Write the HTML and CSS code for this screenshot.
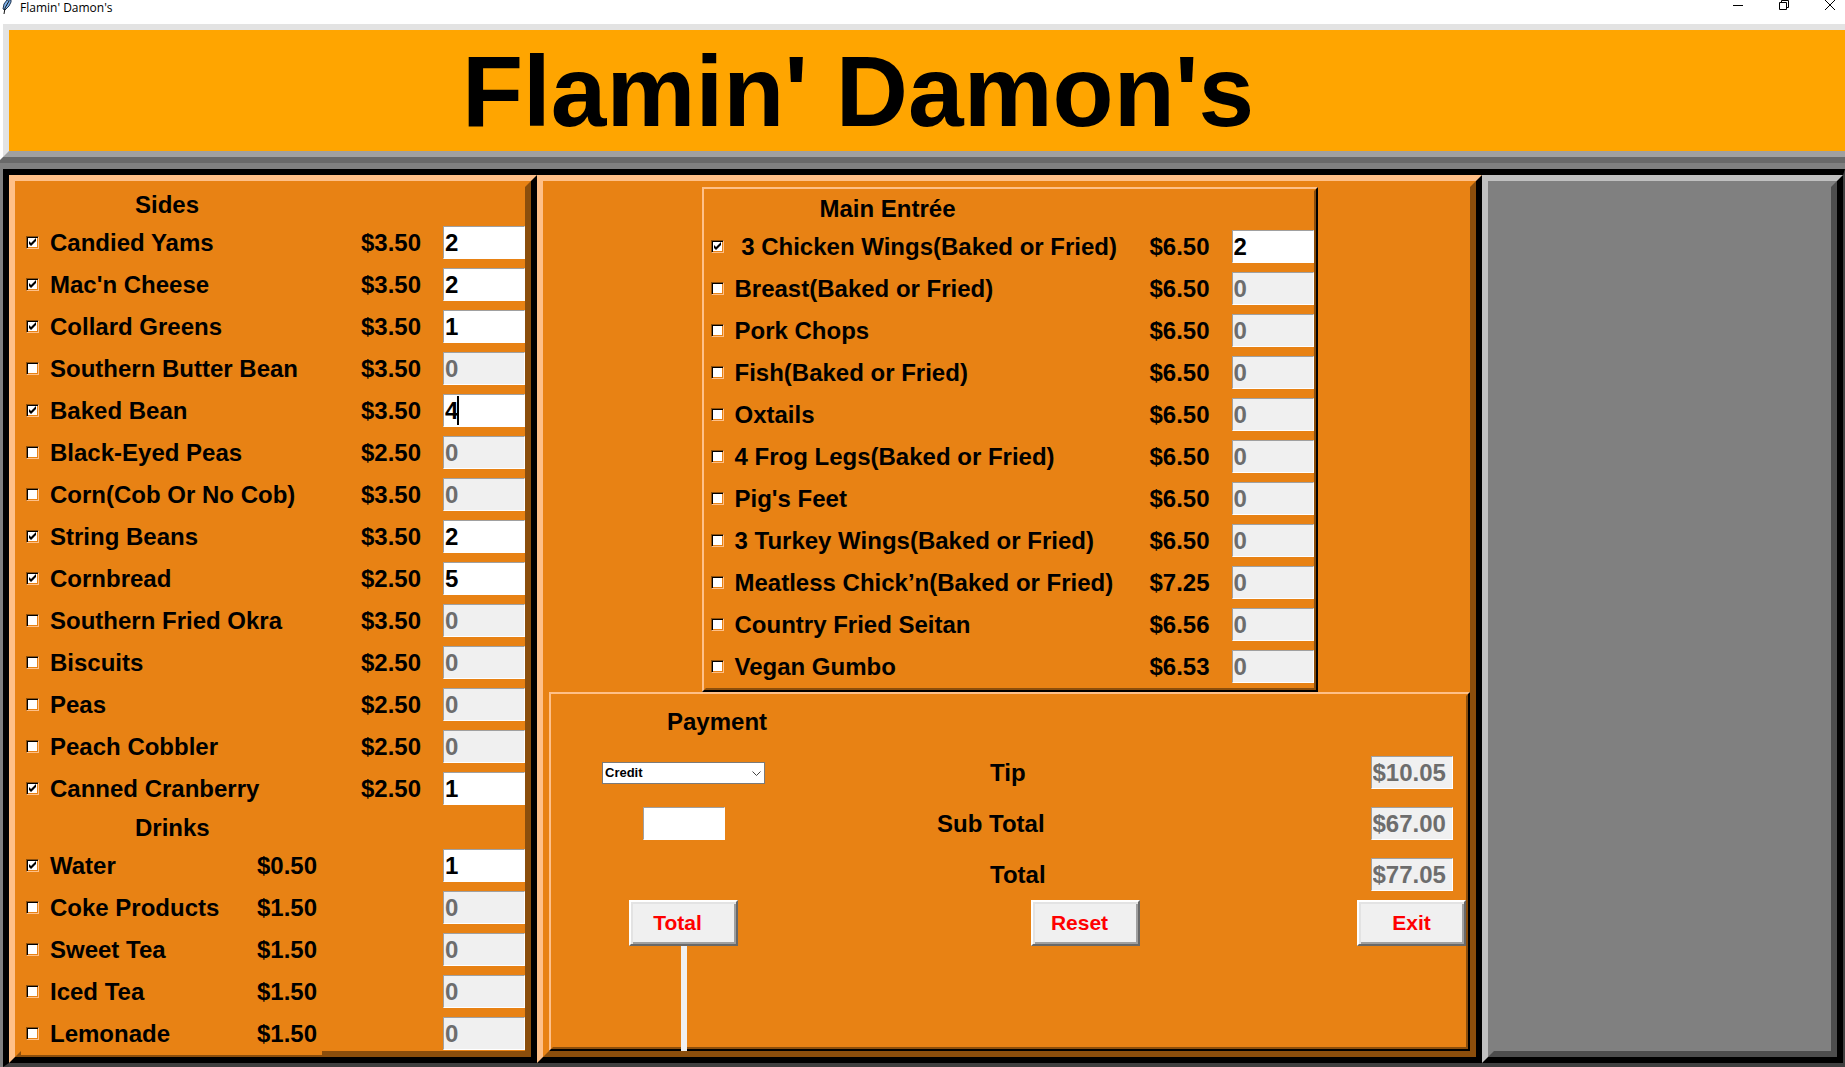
FILE: index.html
```html
<!DOCTYPE html>
<html lang="en">
<head>
<meta charset="utf-8">
<title>Flamin' Damon's</title>
<link rel="stylesheet" href="styles.css">
</head>
<body>
<div class="window">
  <div class="titlebar">
    <svg class="feather" width="10" height="14" viewBox="0 0 10 14" aria-hidden="true">
      <path d="M9 0H5L2 4 1 9l2 1 4-4 2-4z" fill="#7fb2ea" stroke="#1d3350" stroke-width="1"/>
      <path d="M7 1 3 8 2 14" fill="none" stroke="#111" stroke-width="1"/>
    </svg>
    <span class="caption">Flamin' Damon's</span>
    <div class="window-controls">
      <button type="button" aria-label="Minimize"><svg width="11" height="11" viewBox="0 0 11 11"><path d="M0 5.500H10" stroke="#000"/></svg></button>
      <button type="button" aria-label="Restore"><svg width="11" height="11" viewBox="0 0 11 11"><path d="M.5 2.500h7v7h-7zM2.500 2.500v-2h7v7h-2" fill="none" stroke="#000"/></svg></button>
      <button type="button" aria-label="Close"><svg width="11" height="11" viewBox="0 0 11 11"><path d="M0 0 10 10M10 0 0 10" stroke="#000"/></svg></button>
    </div>
  </div>

  <header class="banner"><div class="banner-inner"><h1>Flamin' Damon's</h1></div></header>

  <main class="desk"><div class="desk-inner">
    <section class="panel menu-panel"><div class="panel-inner">
      <h2>Sides</h2>
      <div class="rows">
        <div class="row"><label><input type="checkbox" checked>Candied Yams</label><span class="price">$3.50</span><input class="entry" aria-label="Candied Yams quantity" value="2"></div>
        <div class="row"><label><input type="checkbox" checked>Mac'n Cheese</label><span class="price">$3.50</span><input class="entry" aria-label="Mac'n Cheese quantity" value="2"></div>
        <div class="row"><label><input type="checkbox" checked>Collard Greens</label><span class="price">$3.50</span><input class="entry" aria-label="Collard Greens quantity" value="1"></div>
        <div class="row"><label><input type="checkbox">Southern Butter Bean</label><span class="price">$3.50</span><input class="entry" aria-label="Southern Butter Bean quantity" value="0" disabled></div>
        <div class="row focused"><label><input type="checkbox" checked>Baked Bean</label><span class="price">$3.50</span><input class="entry" aria-label="Baked Bean quantity" value="4"></div>
        <div class="row"><label><input type="checkbox">Black-Eyed Peas</label><span class="price">$2.50</span><input class="entry" aria-label="Black-Eyed Peas quantity" value="0" disabled></div>
        <div class="row"><label><input type="checkbox">Corn(Cob Or No Cob)</label><span class="price">$3.50</span><input class="entry" aria-label="Corn quantity" value="0" disabled></div>
        <div class="row"><label><input type="checkbox" checked>String Beans</label><span class="price">$3.50</span><input class="entry" aria-label="String Beans quantity" value="2"></div>
        <div class="row"><label><input type="checkbox" checked>Cornbread</label><span class="price">$2.50</span><input class="entry" aria-label="Cornbread quantity" value="5"></div>
        <div class="row"><label><input type="checkbox">Southern Fried Okra</label><span class="price">$3.50</span><input class="entry" aria-label="Southern Fried Okra quantity" value="0" disabled></div>
        <div class="row"><label><input type="checkbox">Biscuits</label><span class="price">$2.50</span><input class="entry" aria-label="Biscuits quantity" value="0" disabled></div>
        <div class="row"><label><input type="checkbox">Peas</label><span class="price">$2.50</span><input class="entry" aria-label="Peas quantity" value="0" disabled></div>
        <div class="row"><label><input type="checkbox">Peach Cobbler</label><span class="price">$2.50</span><input class="entry" aria-label="Peach Cobbler quantity" value="0" disabled></div>
        <div class="row"><label><input type="checkbox" checked>Canned Cranberry</label><span class="price">$2.50</span><input class="entry" aria-label="Canned Cranberry quantity" value="1"></div>
      </div>
      <h2>Drinks</h2>
      <div class="rows drinks">
        <div class="row"><label><input type="checkbox" checked>Water</label><span class="price">$0.50</span><input class="entry" aria-label="Water quantity" value="1"></div>
        <div class="row"><label><input type="checkbox">Coke Products</label><span class="price">$1.50</span><input class="entry" aria-label="Coke Products quantity" value="0" disabled></div>
        <div class="row"><label><input type="checkbox">Sweet Tea</label><span class="price">$1.50</span><input class="entry" aria-label="Sweet Tea quantity" value="0" disabled></div>
        <div class="row"><label><input type="checkbox">Iced Tea</label><span class="price">$1.50</span><input class="entry" aria-label="Iced Tea quantity" value="0" disabled></div>
        <div class="row"><label><input type="checkbox">Lemonade</label><span class="price">$1.50</span><input class="entry" aria-label="Lemonade quantity" value="0" disabled></div>
      </div>
    </div></section>

    <section class="panel"><div class="panel-inner center">
      <div class="frame entree"><div class="frame-inner">
        <h2>Main Entrée</h2>
        <div class="rows">
          <div class="row"><label><input type="checkbox" checked>&nbsp;3 Chicken Wings(Baked or Fried)</label><span class="price">$6.50</span><input class="entry" aria-label="3 Chicken Wings quantity" value="2"></div>
          <div class="row"><label><input type="checkbox">Breast(Baked or Fried)</label><span class="price">$6.50</span><input class="entry" aria-label="Breast quantity" value="0" disabled></div>
          <div class="row"><label><input type="checkbox">Pork Chops</label><span class="price">$6.50</span><input class="entry" aria-label="Pork Chops quantity" value="0" disabled></div>
          <div class="row"><label><input type="checkbox">Fish(Baked or Fried)</label><span class="price">$6.50</span><input class="entry" aria-label="Fish quantity" value="0" disabled></div>
          <div class="row"><label><input type="checkbox">Oxtails</label><span class="price">$6.50</span><input class="entry" aria-label="Oxtails quantity" value="0" disabled></div>
          <div class="row"><label><input type="checkbox">4 Frog Legs(Baked or Fried)</label><span class="price">$6.50</span><input class="entry" aria-label="4 Frog Legs quantity" value="0" disabled></div>
          <div class="row"><label><input type="checkbox">Pig's Feet</label><span class="price">$6.50</span><input class="entry" aria-label="Pig's Feet quantity" value="0" disabled></div>
          <div class="row"><label><input type="checkbox">3 Turkey Wings(Baked or Fried)</label><span class="price">$6.50</span><input class="entry" aria-label="3 Turkey Wings quantity" value="0" disabled></div>
          <div class="row"><label><input type="checkbox">Meatless Chick’n(Baked or Fried)</label><span class="price">$7.25</span><input class="entry" aria-label="Meatless Chick’n quantity" value="0" disabled></div>
          <div class="row"><label><input type="checkbox">Country Fried Seitan</label><span class="price">$6.56</span><input class="entry" aria-label="Country Fried Seitan quantity" value="0" disabled></div>
          <div class="row"><label><input type="checkbox">Vegan Gumbo</label><span class="price">$6.53</span><input class="entry" aria-label="Vegan Gumbo quantity" value="0" disabled></div>
        </div>
      </div></div>

      <div class="frame payment"><div class="frame-inner payment-grid">
        <h2 class="wide">Payment</h2>
        <div class="combo">
          <select aria-label="Payment method"><option>Credit</option><option>Cash</option></select>
          <svg width="9" height="6" viewBox="0 0 9 6" aria-hidden="true"><path d="M.5.5l4 4 4-4" fill="none" stroke="#444"/></svg>
        </div>
        <label class="sum short" for="tip">Tip</label>
        <input class="entry" id="tip" value="$10.05" disabled>
        <input class="entry" aria-label="Amount paid">
        <label class="sum" for="subtotal">Sub Total</label>
        <input class="entry" id="subtotal" value="$67.00" disabled>
        <label class="sum short last" for="total">Total</label>
        <input class="entry" id="total" value="$77.05" disabled>
        <button type="button" class="action lead">Total</button>
        <button type="button" class="action lead">Reset</button>
        <button type="button" class="action">Exit</button>
        <div class="strip"></div>
      </div></div>
    </div></section>

    <section class="panel receipt" aria-label="Receipt"><div class="panel-inner"></div></section>
  </div></main>
</div>
</body>
</html>
```
FILE: styles.css
```css
* { box-sizing: border-box; }

:root {
  --orange: #e88214;
  --orange-light: #ffc088;
  --orange-dark: #8b4e0c;
}

body {
  margin: 0;
  overflow-x: hidden;
  background: #fff;
  color: #000;
  font: bold 24px/28px "Liberation Sans", Arial, sans-serif;
}

h1, h2 { margin: 0; font-weight: bold; }

.window {
  display: flex;
  flex-direction: column;
  min-height: 100vh;
  overflow: hidden;
}

/* Title bar */
.titlebar {
  display: flex;
  align-items: flex-start;
  height: 18px;
  padding: 0 9px 0 2px;
  font: 12px/16px "Open Sans", "Noto Sans", sans-serif;
}
.caption { flex: 1; padding-left: 8px; }
.window-controls { display: flex; gap: 35px; }
.window-controls button {
  width: 11px;
  height: 11px;
  padding: 0;
  border: 0;
  background: none;
}
.window-controls svg, .feather { display: block; }

/* Banner; its outer edges run past the sides of the window */
.banner {
  margin: 0 -12px 0 -3px;
  border: 6px solid;
  border-color: #fff #696969 #696969 #fff;
}
.banner-inner {
  padding: 2px 0 0 453px;
  border: 6px solid;
  border-color: #e3e3e3 #a0a0a0 #a0a0a0 #e3e3e3;
  background: #ffa500;
}
h1 { font-size: 100px; line-height: 119px; white-space: nowrap; }

/* Sunken area that holds the three panels */
.desk {
  display: flex;
  flex: 1;
  border: solid #808080;
  border-width: 6px 0 0 3px;
}
.desk-inner {
  display: grid;
  flex: 1;
  grid-template-columns: 528px minmax(0, 1fr) 361px;
  border: solid;
  border-width: 6px 2px 4px 6px;
  border-color: #000 #404040 #404040 #000;
}

.panel {
  display: flex;
  border: 6px solid;
  border-color: var(--orange-light) #000 #000 var(--orange-light);
}
.panel-inner {
  position: relative;
  flex: 1;
  min-width: 0;
  border: 6px solid;
  border-color: var(--orange) var(--orange-dark) var(--orange-dark) var(--orange);
  background: var(--orange);
}
.menu-panel .panel-inner { padding-bottom: 1px; }
.menu-panel .panel-inner::after {
  content: "";
  position: absolute;
  left: 0;
  bottom: -4px;
  width: 301px;
  height: 4px;
  background: var(--orange);
}
.receipt { border-color: #c0c0c0 #000 #000 #c0c0c0; }
.receipt .panel-inner {
  border-color: #808080 #4d4d4d #4d4d4d #808080;
  background: #808080;
}

/* Menu rows */
h2 { padding-left: 114px; font-size: 24px; line-height: 35px; }
.rows {
  display: flex;
  flex-direction: column;
  gap: 9px;
  padding: 4px 0 5px 5px;
}
.drinks { padding-bottom: 0; }
.row { display: flex; align-items: center; height: 33px; }
.row label {
  display: flex;
  flex: 1;
  align-items: center;
  gap: 11px;
  white-space: nowrap;
}
.price { margin-right: 22px; }
.drinks label { flex: none; width: 231px; }
.drinks .price { flex: 1; }

input[type="checkbox"] {
  appearance: none;
  width: 13px;
  height: 13px;
  margin: 0;
  border: 1px solid;
  border-color: var(--orange-dark) var(--orange-light) var(--orange-light) var(--orange-dark);
  background: #fff;
  box-shadow: inset 1px 1px #000, inset -1px -1px var(--orange);
}
input[type="checkbox"]:checked {
  background: #fff url("data:image/svg+xml,%3Csvg xmlns='http://www.w3.org/2000/svg' viewBox='0 0 11 11'%3E%3Cpath d='M2 4v3l2 2 5-5V1L4 6z'/%3E%3C/svg%3E") center / 11px 11px no-repeat;
}

.entry {
  width: 82px;
  height: 33px;
  padding: 0 1px;
  border: 1px solid;
  border-color: #a0a0a0 #fff #fff #a0a0a0;
  border-radius: 0;
  background: #fff;
  color: #000;
  font: inherit;
}
.entry:disabled { background: #f0f0f0; color: #6d6d6d; }
/* Text caret of the active entry */
.focused { position: relative; }
.focused::after {
  content: "";
  position: absolute;
  top: 2px;
  right: 66px;
  width: 2px;
  height: 29px;
  background: #000;
}

/* Raised frames in the middle panel */
.center { display: flex; flex-direction: column; }
.frame {
  border: 2px solid;
  border-color: var(--orange-light) #000 #000 var(--orange-light);
}
.frame-inner {
  border: 2px solid;
  border-color: var(--orange) var(--orange-dark) var(--orange-dark) var(--orange);
}
.entree { align-self: center; width: 616px; }

.payment { display: flex; flex: 1; }
.payment-grid {
  display: grid;
  flex: 1;
  grid-template-columns: 261px minmax(0, 1fr) 109px;
  grid-template-rows: repeat(4, 51px) 46px 1fr;
  align-items: center;
  justify-items: center;
}
.wide { grid-column: 1 / -1; justify-self: start; }
.sum { justify-self: start; padding-left: 123px; }
.short { padding-left: 176px; }
.last { grid-column: 2; }

.combo { position: relative; width: 163px; height: 22px; }
.combo select {
  display: block;
  width: 100%;
  height: 100%;
  padding: 0 2px;
  border: 1px solid #7a7a7a;
  border-radius: 0;
  appearance: none;
  background: #fff;
  color: #000;
  font: bold 13px/20px "Liberation Sans", Arial, sans-serif;
}
.combo svg { position: absolute; top: 9px; right: 4px; }

.action {
  width: 109px;
  height: 46px;
  padding: 0;
  border: 2px solid;
  border-color: #fff #696969 #696969 #fff;
  background: #f0f0f0;
  box-shadow: inset 2px 2px #e3e3e3, inset -2px -2px #a0a0a0;
  color: #f00;
  font: bold 21px/24px "Liberation Sans", Arial, sans-serif;
}
.lead { padding-right: 12px; }

.strip {
  align-self: stretch;
  width: 6px;
  margin-bottom: -4px;
  background: #f0f0f0;
}
```
